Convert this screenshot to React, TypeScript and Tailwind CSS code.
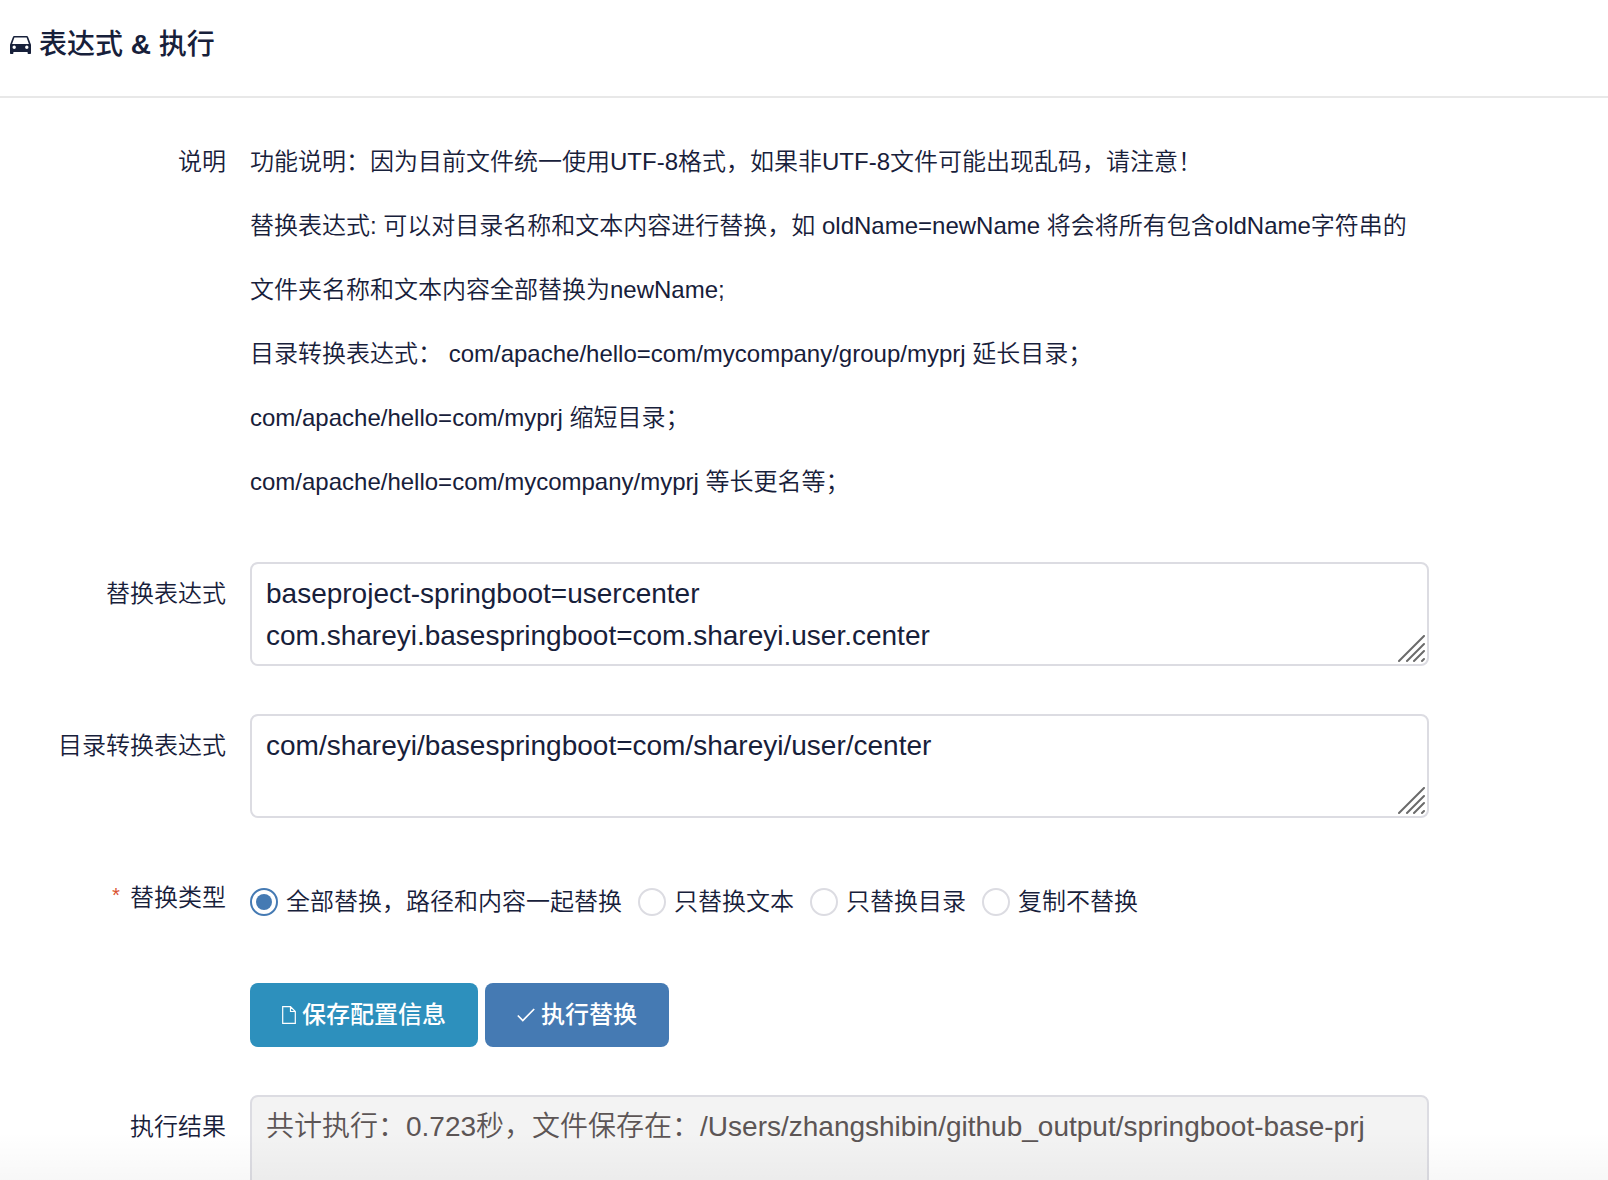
import type { ReactNode } from 'react';

const labelClass = 'w-[226px] shrink-0 text-right text-[24px]';
const areaClass =
  'block w-full resize-none overflow-hidden rounded-lg border-2 border-[#dcdce2] px-[14px] pt-[9px] pb-[7px] text-[28px] leading-[42px] outline-none';

const description = [
  '功能说明：因为目前文件统一使用UTF-8格式，如果非UTF-8文件可能出现乱码，请注意！',
  '替换表达式: 可以对目录名称和文本内容进行替换，如 oldName=newName 将会将所有包含oldName字符串的文件夹名称和文本内容全部替换为newName;',
  '目录转换表达式： com/apache/hello=com/mycompany/group/myprj 延长目录；',
  'com/apache/hello=com/myprj 缩短目录；',
  'com/apache/hello=com/mycompany/myprj 等长更名等；',
];

const replaceTypes = ['全部替换，路径和内容一起替换', '只替换文本', '只替换目录', '复制不替换'];

function CarIcon() {
  return (
    <svg className="h-[18px] w-[21px]" viewBox="0 0 21 18" fill="currentColor" aria-hidden="true">
      <path
        fillRule="evenodd"
        d="M4.6 0h11.8c.9 0 1.5.5 1.8 1.3L21 8.8v8.1c0 .6-.4 1.1-1 1.1h-1.400c-.6 0-1-.5-1-1.100V16H3.400v.9c0 .6-.4 1.1-1 1.100H1c-.6 0-1-.5-1-1.100V8.800L2.800 1.300C3.100.5 3.700 0 4.600 0zM4.400 1.400L2.100 8h16.800L16.600 1.400zM4.200 9.600a1.700 1.700 0 100 3.400 1.700 1.700 0 000-3.400zM16.800 9.600a1.700 1.700 0 100 3.400 1.700 1.700 0 000-3.400z"
      />
    </svg>
  );
}

function DocumentIcon() {
  return (
    <svg className="h-[18px] w-3.5" viewBox="0 0 14 18" fill="none" stroke="currentColor" strokeWidth="1.2" aria-hidden="true">
      <path d="M.7.7h7.800l4.800 4.800v11.800H.7zM8.500.7v4.800h4.800" />
    </svg>
  );
}

function CheckIcon() {
  return (
    <svg className="h-[14px] w-[18px]" viewBox="0 0 18 14" fill="none" stroke="currentColor" strokeWidth="1.7" aria-hidden="true">
      <path d="M.8 7.500l5 5L17.200 1" />
    </svg>
  );
}

function Grip() {
  return (
    <svg
      className="pointer-events-none absolute right-[3px] bottom-[3px] h-7 w-7"
      viewBox="0 0 28 28"
      fill="none"
      stroke="#6b6b6b"
      strokeWidth="2"
      strokeLinecap="round"
    >
      <path d="M1 26L26 1M9 26L26 9M16 26L26 16M24 26L26 24" />
    </svg>
  );
}

function Field({ label, htmlFor, children }: { label: string; htmlFor: string; children: ReactNode }) {
  return (
    <div className="flex gap-6">
      <label htmlFor={htmlFor} className={`${labelClass} pt-[14px] leading-9`}>
        {label}
      </label>
      <div className="relative min-w-0 grow">{children}</div>
    </div>
  );
}

export default function App() {
  return (
    <div className="relative h-screen overflow-hidden bg-white font-['Liberation_Sans','Noto_Sans_CJK_SC',sans-serif] font-[350] text-[#17203a]">
      <header className="flex h-[98px] items-center gap-2 border-b-2 border-[#e8e8e8] px-2.5 pb-1.5">
        <CarIcon />
        <h1 className="text-[28px] font-medium">
          表达式 <span className="font-bold">&amp;</span> 执行
        </h1>
      </header>

      <form className="flex flex-col pt-8 pr-[179px]">
        <div className="flex gap-6">
          <span className={`${labelClass} leading-[64px]`}>说明</span>
          <div className="grow text-[24px] leading-[64px]">
            {description.map((line) => (
              <p key={line}>{line}</p>
            ))}
          </div>
        </div>

        <div className="mt-12 flex flex-col gap-12">
          <Field label="替换表达式" htmlFor="replace">
            <textarea
              id="replace"
              rows={2}
              className={areaClass}
              defaultValue={'baseproject-springboot=usercenter\ncom.shareyi.basespringboot=com.shareyi.user.center'}
            />
            <Grip />
          </Field>

          <Field label="目录转换表达式" htmlFor="dirs">
            <textarea
              id="dirs"
              rows={2}
              className={areaClass}
              defaultValue="com/shareyi/basespringboot=com/shareyi/user/center"
            />
            <Grip />
          </Field>

          <div role="radiogroup" aria-labelledby="type-label" className="flex gap-6">
            <span id="type-label" className={`${labelClass} pt-[14px] leading-9`}>
              <span className="mr-2 align-top font-mono text-[20px] text-[#d9502f]">*</span>
              替换类型
            </span>
            <div className="flex h-[69px] grow items-center gap-4 pt-0.5">
              {replaceTypes.map((type, i) => (
                <label key={type} className="flex items-center gap-2 text-[24px]">
                  <input
                    type="radio"
                    name="type"
                    defaultChecked={i === 0}
                    className="size-7 appearance-none rounded-full border-2 border-[#dcdce2] bg-white bg-clip-content p-1 checked:border-[#457ab3] checked:bg-[#457ab3]"
                  />
                  {type}
                </label>
              ))}
            </div>
          </div>

          {/* Actions */}
          <div className="flex gap-[7px] pl-[250px] text-[24px] font-medium text-white">
            <button type="button" className="flex h-16 items-center gap-1.5 rounded-lg bg-[#2d90bd] px-8">
              <DocumentIcon />
              保存配置信息
            </button>
            <button type="button" className="flex h-16 items-center gap-1.5 rounded-lg bg-[#457ab3] px-8">
              <CheckIcon />
              执行替换
            </button>
          </div>

          <Field label="执行结果" htmlFor="result">
            <textarea
              id="result"
              rows={4}
              readOnly
              className={`${areaClass} bg-[#f3f3f3] text-[#5c5555]`}
              defaultValue="共计执行：0.723秒，文件保存在：/Users/zhangshibin/github_output/springboot-base-prj"
            />
          </Field>
        </div>
      </form>

      {/* Fade at the lower edge of the window */}
      <div className="pointer-events-none absolute inset-x-0 bottom-0 h-12 bg-linear-to-b from-transparent to-black/3" />
    </div>
  );
}
